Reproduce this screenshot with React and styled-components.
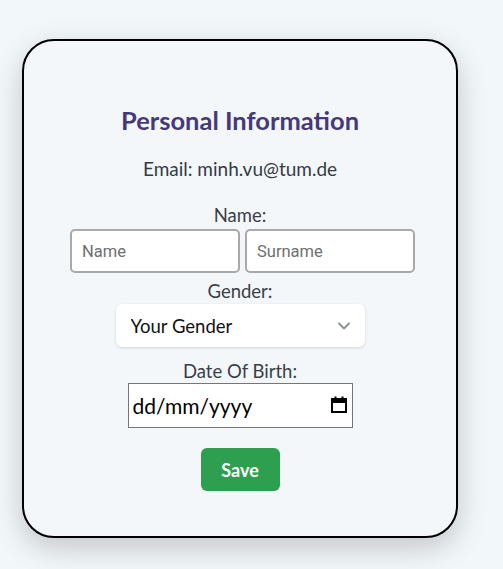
import React from 'react'
import styled, { createGlobalStyle } from 'styled-components'

const Global = createGlobalStyle`
  html, body {
    margin: 0;
    min-height: 100%;
    background: #f2f7fa;
    font-family: Lato, "Open Sans", sans-serif;
  }
`

const Page = styled.div`
  padding: 39px 0 40px 22px;
`

const Card = styled.form`
  box-sizing: border-box;
  width: 436px;
  height: 499px;
  border: 2px solid #000;
  border-radius: 32px;
  background: #f3f7fa;
  box-shadow: 0 10px 30px rgba(0, 0, 0, 0.2);
  display: flex;
  flex-direction: column;
  align-items: center;
  padding-top: 63px;
`

const Title = styled.h2`
  margin: 0;
  font-size: 25.5px;
  line-height: 32px;
  font-weight: 700;
  color: #45397a;
`

const Email = styled.p`
  margin: 22px 0 0;
  font-size: 19px;
  line-height: 22px;
  color: #333b45;
`

const Label = styled.label`
  display: block;
  font-size: 18.5px;
  color: #3a3f47;
  margin-top: ${p => p.$top || 0}px;
  line-height: 22px;
`

const Row = styled.div`
  display: flex;
  gap: 5px;
  margin: 3px 0 0 5px;
`

const TextInput = styled.input`
  box-sizing: border-box;
  width: 170px;
  height: 44px;
  border: 2px solid #a9a9a9;
  border-radius: 5px;
  padding: 0 10px;
  font-family: Roboto, "Liberation Sans", Arial, sans-serif;
  font-size: 16.5px;
  background: #fff;
  &::placeholder {
    color: #6f6f6f;
  }
`

const SelectBox = styled.div`
  position: relative;
  margin-top: 2px;
`

const Select = styled.select`
  box-sizing: border-box;
  appearance: none;
  width: 249px;
  height: 43px;
  border: none;
  border-radius: 6px;
  background: #fff;
  box-shadow: 0 1px 3px rgba(0, 0, 0, 0.15);
  padding: 0 15px;
  font-family: Lato, sans-serif;
  font-size: 18.5px;
  color: #111;
`

const Chevron = styled.svg`
  position: absolute;
  right: 14px;
  top: 15px;
  pointer-events: none;
`

const DateBox = styled.div`
  position: relative;
  margin-top: 1px;
`

const DateInput = styled.input`
  box-sizing: border-box;
  width: 225px;
  height: 45px;
  border: 1px solid #767676;
  border-radius: 0;
  background: #fff;
  padding: 0 4px;
  font-family: Lato, sans-serif;
  font-size: 21px;
  color: #000;
  &::placeholder {
    color: #000;
  }
`

const CalendarIcon = styled.svg`
  position: absolute;
  right: 6px;
  top: 13px;
  pointer-events: none;
`

const SaveButton = styled.button`
  margin-top: 20px;
  width: 79px;
  height: 43px;
  border: none;
  border-radius: 6px;
  background: #2e9e4f;
  color: #fff;
  font-family: Lato, sans-serif;
  font-weight: 700;
  font-size: 18px;
  cursor: pointer;
`

const Field = styled.div`
  display: flex;
  flex-direction: column;
  align-items: center;
`

export default function App() {
  return (
    <>
      <Global />
      <Page>
        <Card onSubmit={e => e.preventDefault()}>
          <Title>Personal Information</Title>
          <Email>Email: minh.vu@tum.de</Email>
          <Field>
            <Label $top={24}>Name:</Label>
            <Row>
              <TextInput placeholder="Name" />
              <TextInput placeholder="Surname" />
            </Row>
          </Field>
          <Field>
            <Label $top={7}>Gender:</Label>
            <SelectBox>
              <Select defaultValue="">
                <option value="">Your Gender</option>
                <option value="m">Male</option>
                <option value="f">Female</option>
              </Select>
              <Chevron width="14" height="14" viewBox="0 0 14 14">
                <path d="M2 4.5 L7 9.5 L12 4.5" fill="none" stroke="#8f939b" strokeWidth="2" strokeLinecap="round" strokeLinejoin="round" />
              </Chevron>
            </SelectBox>
          </Field>
          <Field>
            <Label $top={13}>Date Of Birth:</Label>
            <DateBox>
              <DateInput type="text" placeholder="dd/mm/yyyy" />
              <CalendarIcon width="16" height="17" viewBox="0 0 16 17">
                <rect x="1" y="3" width="14" height="13" fill="none" stroke="#000" strokeWidth="2" />
                <rect x="1" y="3" width="14" height="4" fill="#000" />
                <rect x="3.5" y="0.5" width="2" height="3" fill="#000" />
                <rect x="10.5" y="0.5" width="2" height="3" fill="#000" />
              </CalendarIcon>
            </DateBox>
          </Field>
          <SaveButton type="submit">Save</SaveButton>
        </Card>
      </Page>
    </>
  )
}
